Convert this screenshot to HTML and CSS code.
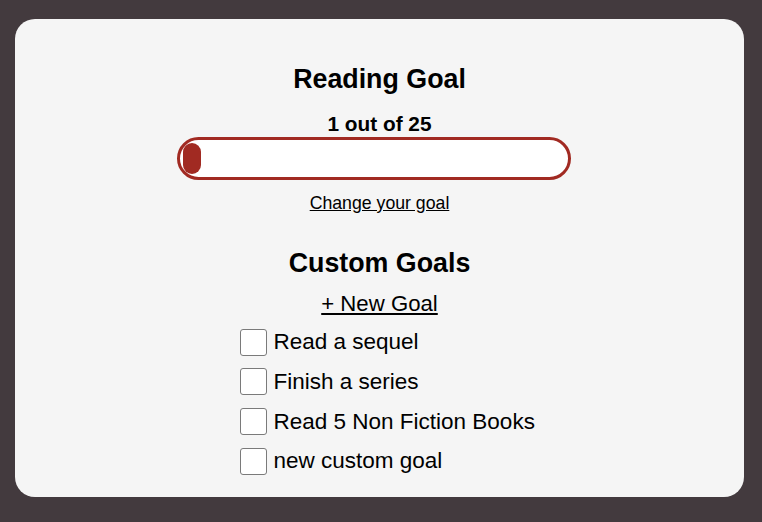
FILE: index.html
```html
<!DOCTYPE html>
<html lang="en">
<head>
<meta charset="utf-8">
<title>Reading Goal</title>
<link rel="stylesheet" href="styles.css">
</head>
<body>
<main class="card">
  <h1 class="title">Reading Goal</h1>
  <p class="count">1 out of 25</p>
  <div class="bar"><div class="bar-fill" style="width:18px"></div></div>
  <a class="change" href="#">Change your goal</a>
  <h2 class="title custom-title">Custom Goals</h2>
  <a class="new-goal" href="#">+ New Goal</a>
  <ul class="goals">
    <li class="goal"><input type="checkbox" class="check"><span>Read a sequel</span></li>
    <li class="goal"><input type="checkbox" class="check"><span>Finish a series</span></li>
    <li class="goal"><input type="checkbox" class="check"><span>Read 5 Non Fiction Books</span></li>
    <li class="goal"><input type="checkbox" class="check"><span>new custom goal</span></li>
  </ul>
</main>
</body>
</html>
```
FILE: styles.css
```css
html, body {
  margin: 0;
  padding: 0;
}
body {
  background: #433a3e;
  font-family: "Liberation Sans", Arial, sans-serif;
  color: #000;
  width: 762px;
  height: 522px;
  overflow: hidden;
}
.card {
  box-sizing: border-box;
  margin: 19px 0 0 15px;
  width: 729px;
  height: 478px;
  background: #f5f5f5;
  border-radius: 20px;
  padding-top: 45px;
  display: flex;
  flex-direction: column;
  align-items: center;
}
.title {
  margin: 0;
  font-size: 26.8px;
  line-height: 30px;
  font-weight: bold;
}
.count {
  margin: 18px 0 0;
  font-size: 20.8px;
  line-height: 24px;
  font-weight: bold;
}
.bar {
  box-sizing: border-box;
  margin: 1px 11px 0 0;
  width: 394px;
  height: 43px;
  border: 3px solid #a12a22;
  border-radius: 22px;
  background: #fff;
  padding: 3px;
}
.bar-fill {
  height: 100%;
  background: #a12a22;
  border-radius: 9px;
}
.change {
  margin-top: 13px;
  font-size: 17.7px;
  line-height: 20px;
  color: #000;
  text-decoration: underline;
}
.custom-title {
  margin-top: 35px;
}
.new-goal {
  margin-top: 13px;
  font-size: 22.2px;
  line-height: 26px;
  color: #000;
  text-decoration: underline;
}
.goals {
  list-style: none;
  margin: 11.6px 0 0;
  padding: 0;
  width: 280px;
  display: flex;
  flex-direction: column;
  gap: 12.8px;
}
.goal {
  display: flex;
  align-items: center;
  height: 27px;
  white-space: nowrap;
  font-size: 22.5px;
  line-height: 26px;
}
.check {
  appearance: none;
  -webkit-appearance: none;
  box-sizing: border-box;
  margin: 0 7px 0 0;
  width: 27px;
  height: 27px;
  border: 1px solid #7a7a7a;
  border-radius: 3px;
  background: #fff;
  flex: none;
}
```
